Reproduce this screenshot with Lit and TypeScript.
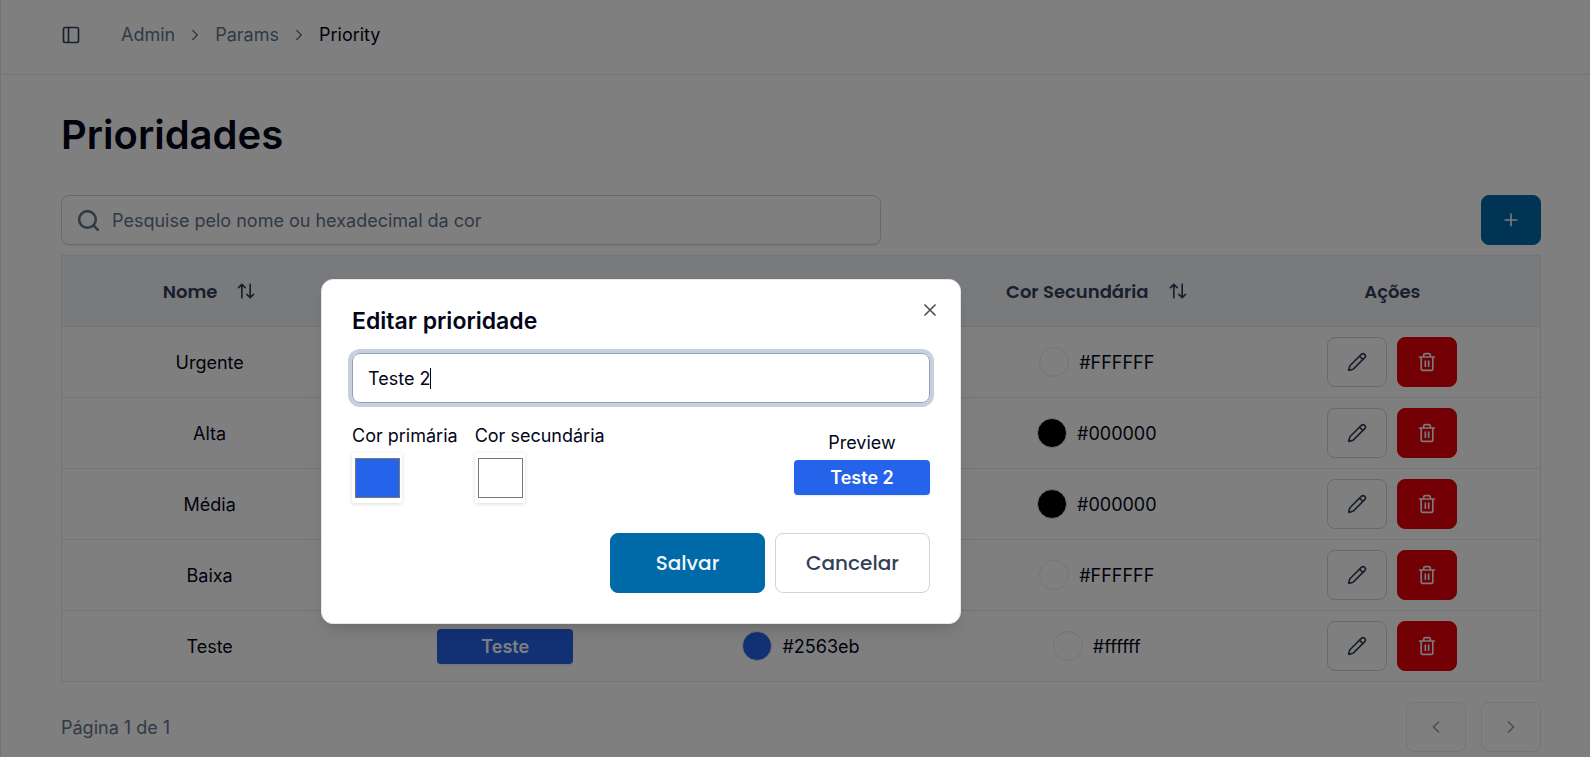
import { LitElement, html, css, svg, nothing } from "lit";
import { customElement, state } from "lit/decorators.js";

const icon = (body: unknown, size = 20, width = 2) => html`<svg
  width=${size} height=${size} viewBox="0 0 24 24" fill="none" stroke="currentColor"
  stroke-width=${width} stroke-linecap="round" stroke-linejoin="round" aria-hidden="true">${body}</svg>`;

const panel = svg`<rect width="18" height="18" x="3" y="3" rx="2"/><path d="M9 3v18"/>`;
const chevronRight = svg`<path d="m9 18 6-6-6-6"/>`;
const chevronLeft = svg`<path d="m15 18-6-6 6-6"/>`;
const search = svg`<circle cx="11" cy="11" r="8"/><path d="m21 21-4.3-4.3"/>`;
const plus = svg`<path d="M5 12h14M12 5v14"/>`;
const close = svg`<path d="M18 6 6 18M6 6l12 12"/>`;
const sort = svg`<path d="m21 16-4 4-4-4M17 20V4M3 8l4-4 4 4M7 4v16"/>`;
const pencil = svg`<path d="M21.2 6.8a1 1 0 0 0-4-4L3.8 16.2a2 2 0 0 0-.5.8L2 21.400a.5.5 0 0 0 .6.6l4.400-1.300a2 2 0 0 0 .8-.5z"/><path d="m15 5 4 4"/>`;
const trash = svg`<path d="M3 6h18M19 6v14a2 2 0 0 1-2 2H7a2 2 0 0 1-2-2V6M8 6V4a2 2 0 0 1 2-2h4a2 2 0 0 1 2 2v2M10 11v6M14 11v6"/>`;

interface Priority {
  name: string;
  primary?: string;
  secondary: string;
}

@customElement("app-root")
export class AppRoot extends LitElement {
  @state() private draft: Priority = { name: "Teste 2", primary: "#2563eb", secondary: "#ffffff" };

  private rows: Priority[] = [
    { name: "Urgente", secondary: "#FFFFFF" },
    { name: "Alta", secondary: "#000000" },
    { name: "Média", secondary: "#000000" },
    { name: "Baixa", secondary: "#FFFFFF" },
    { name: "Teste", primary: "#2563eb", secondary: "#ffffff" },
  ];

  static styles = css`
    :host {
      display: block;
      position: relative;
      min-height: 100vh;
      overflow: hidden;
      background: #fff;
      color: #020618;
      font: 400 18px/25px Inter, sans-serif;
      --sidebar: 308px;
      --fold: 146px;
    }
    *, *::before, *::after { box-sizing: border-box; }
    svg { display: block; flex: none; }
    button, input { font: inherit; color: inherit; margin: 0; }
    .shell { min-height: 100vh; border-left: 1px solid #e2e8f0; }
    .topbar {
      display: flex;
      align-items: center;
      gap: 40px;
      height: 75px;
      padding: 0 60px 5px;
      border-bottom: 1px solid #e2e8f0;
    }
    .icon-btn { display: flex; padding: 0; border: 0; background: none; color: #314158; }
    .crumbs ol { display: flex; align-items: center; gap: 11px; margin: 0; padding: 0; list-style: none; color: #62748e; }
    .crumbs a { color: inherit; text-decoration: none; }
    .crumbs .here { color: #020618; }
    .page { display: flex; flex-direction: column; padding: 35px 49px 0 60px; }
    h1 { margin: 0; font-size: 40px; line-height: 50px; font-weight: 600; }
    .tools { display: flex; justify-content: space-between; margin: 35px 0 10px; }
    .search {
      display: flex;
      align-items: center;
      gap: 11px;
      flex: 0 1 820px;
      height: 50px;
      padding: 0 14px;
      border: 1px solid #cad5e2;
      border-radius: 8px;
      color: #62748e;
      box-shadow: 0 1px 2px rgb(0 0 0 / 0.05);
    }
    .search input { flex: 1; min-width: 0; padding: 0; border: 0; outline: 0; background: none; }
    .search input::placeholder { color: #62748e; opacity: 1; }
    .btn {
      display: inline-flex;
      align-items: center;
      justify-content: center;
      width: 60px;
      height: 50px;
      padding: 0;
      border: 1px solid #cad5e2;
      border-radius: 8px;
      background: #fff;
      color: #314158;
    }
    .primary { border-color: #0069a8; background: #0069a8; color: #f1f5f9; }
    .danger { border-color: #e7000b; background: #e7000b; color: #f1f5f9; }
    .btn:disabled { opacity: 0.5; }
    table { width: 100%; table-layout: fixed; border-collapse: collapse; border: 1px solid #e2e8f0; }
    th, td { height: 71px; padding: 0; border-bottom: 1px solid #e2e8f0; text-align: center; }
    th { background: #f1f5f9; color: #314158; font-family: Poppins, Inter, sans-serif; font-weight: 600; }
    .sort { display: inline-flex; align-items: center; gap: 19px; padding: 0; border: 0; background: none; }
    .cell { display: flex; align-items: center; justify-content: center; gap: 10px; }
    .dot { width: 30px; height: 30px; border: 1px solid #e2e8f0; border-radius: 50%; }
    .badge {
      display: inline-flex;
      align-items: center;
      justify-content: center;
      width: 136px;
      height: 35px;
      border-radius: 4px;
      font-weight: 600;
      box-shadow: 0 1px 2px rgb(0 0 0 / 0.1);
    }
    .pager { display: flex; align-items: center; gap: 15px; padding-top: 20px; color: #62748e; }
    .pager p { flex: 1; margin: 0; }
    .overlay {
      position: absolute;
      inset: 0 0 calc(-1 * var(--fold)) calc(-1 * var(--sidebar));
      display: flex;
      align-items: center;
      justify-content: center;
      background: rgb(0 0 0 / 0.5);
    }
    .dialog {
      position: relative;
      display: flex;
      flex-direction: column;
      gap: 20px;
      width: 640px;
      margin: 0;
      padding: 30px;
      border: 1px solid #e2e8f0;
      border-radius: 12px;
      background: #fff;
      color: #020618;
      box-shadow: 0 12px 19px -4px rgb(0 0 0 / 0.1), 0 5px 8px -5px rgb(0 0 0 / 0.1);
    }
    h2 { margin: 0; font-size: 23px; line-height: 23px; font-weight: 600; }
    .close { position: absolute; top: 20px; right: 20px; opacity: 0.7; color: #020618; }
    .field {
      display: flex;
      align-items: center;
      height: 50px;
      padding: 0 15px;
      border: 1px solid #90a1b9;
      border-radius: 8px;
      box-shadow: 0 0 0 4px #c7d0dc;
      cursor: text;
    }
    .field input { field-sizing: content; padding: 0; border: 0; outline: 0; background: none; caret-color: transparent; }
    .caret { width: 1px; height: 21px; background: #020618; }
    .options { display: flex; align-items: center; justify-content: space-between; }
    .colors { display: flex; gap: 17px; }
    .stack { display: flex; flex-direction: column; gap: 5px; }
    .preview { align-items: center; padding-bottom: 2px; }
    .swatch {
      width: 50px;
      height: 50px;
      padding: 5px 2px 5px 3px;
      border: 0;
      background: #fff;
      box-shadow: 0 1px 4px rgb(0 0 0 / 0.14);
    }
    .swatch::-webkit-color-swatch-wrapper { padding: 0; }
    .swatch::-webkit-color-swatch { border: 1px solid #777; border-radius: 0; }
    .actions { display: flex; justify-content: flex-end; gap: 10px; padding-top: 10px; }
    .actions .btn { width: 155px; height: 60px; font: 500 20px/28px Poppins, Inter, sans-serif; }
  `;

  private color(value?: string) {
    return value
      ? html`<div class="cell"><span class="dot" style="background:${value}"></span>${value}</div>`
      : nothing;
  }

  private badge(p: Priority) {
    return p.primary
      ? html`<span class="badge" style="background:${p.primary};color:${p.secondary}">${p.name}</span>`
      : nothing;
  }

  private edit(key: keyof Priority) {
    return (e: Event) => {
      this.draft = { ...this.draft, [key]: (e.target as HTMLInputElement).value };
    };
  }

  render() {
    const d = this.draft;
    return html`
      <div class="shell">
        <header class="topbar">
          <button class="icon-btn" aria-label="Menu">${icon(panel)}</button>
          <nav class="crumbs">
            <ol>
              <li><a href="#admin">Admin</a></li>
              <li>${icon(chevronRight, 18)}</li>
              <li><a href="#params">Params</a></li>
              <li>${icon(chevronRight, 18)}</li>
              <li class="here" aria-current="page">Priority</li>
            </ol>
          </nav>
        </header>
        <main class="page">
          <h1>Prioridades</h1>
          <div class="tools">
            <label class="search">
              ${icon(search, 25, 2.5)}
              <input type="search" aria-label="Pesquisar" placeholder="Pesquise pelo nome ou hexadecimal da cor" />
            </label>
            <button class="btn primary" aria-label="Adicionar">${icon(plus)}</button>
          </div>
          <table>
            <thead>
              <tr>
                ${["Nome", "Preview", "Cor Primária", "Cor Secundária"].map(
                  (t) => html`<th scope="col"><button class="sort">${t} ${icon(sort)}</button></th>`
                )}
                <th scope="col">Ações</th>
              </tr>
            </thead>
            <tbody>
              ${this.rows.map(
                (p) => html`<tr>
                  <td>${p.name}</td>
                  <td><div class="cell">${this.badge(p)}</div></td>
                  <td>${this.color(p.primary)}</td>
                  <td>${this.color(p.secondary)}</td>
                  <td>
                    <div class="cell">
                      <button class="btn" aria-label="Editar">${icon(pencil)}</button>
                      <button class="btn danger" aria-label="Excluir">${icon(trash)}</button>
                    </div>
                  </td>
                </tr>`
              )}
            </tbody>
          </table>
          <footer class="pager">
            <p>Página 1 de 1</p>
            <button class="btn" disabled aria-label="Anterior">${icon(chevronLeft)}</button>
            <button class="btn" disabled aria-label="Próxima">${icon(chevronRight)}</button>
          </footer>
        </main>
      </div>
      <div class="overlay">
        <section class="dialog" role="dialog" aria-modal="true" aria-labelledby="title">
          <h2 id="title">Editar prioridade</h2>
          <button class="icon-btn close" aria-label="Fechar">${icon(close)}</button>
          <label class="field">
            <input aria-label="Nome" .value=${d.name} @input=${this.edit("name")} />
            <span class="caret"></span>
          </label>
          <div class="options">
            <div class="colors">
              <div class="stack">
                <label for="primary">Cor primária</label>
                <input class="swatch" id="primary" type="color" .value=${d.primary ?? "#000000"} @input=${this.edit("primary")} />
              </div>
              <div class="stack">
                <label for="secondary">Cor secundária</label>
                <input class="swatch" id="secondary" type="color" .value=${d.secondary} @input=${this.edit("secondary")} />
              </div>
            </div>
            <div class="stack preview">
              <span>Preview</span>
              ${this.badge(d)}
            </div>
          </div>
          <div class="actions">
            <button class="btn primary">Salvar</button>
            <button class="btn">Cancelar</button>
          </div>
        </section>
      </div>
    `;
  }
}
